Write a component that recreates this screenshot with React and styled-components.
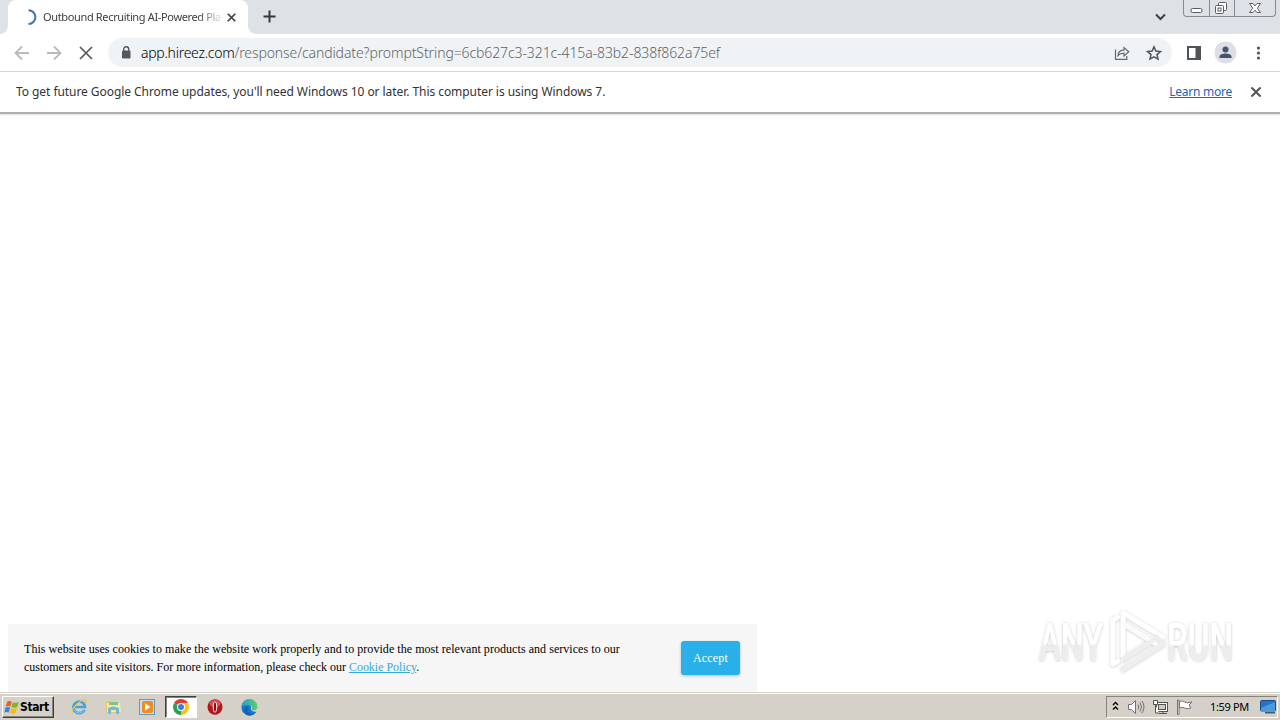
import React from 'react'
import styled, { createGlobalStyle } from 'styled-components';

const uiFont = `"Noto Sans", "Open Sans", sans-serif`;
const strip = '#dee1e6';
const face = '#d5d1c9';

const GlobalStyle = createGlobalStyle`
    * { box-sizing: border-box; }
    body { margin: 0; overflow: hidden; background: #fff; }
    svg { display: block; flex: none; }
`;

const Screen = styled.div`
    width: 1280px;
    height: 720px;
    display: flex;
    flex-direction: column;
    overflow: hidden;
    background: #fff;
    font-family: ${uiFont};
`;

const TabStrip = styled.header`
    height: 34px;
    flex: none;
    display: flex;
    align-items: flex-start;
    background: ${strip};
    padding-right: 4px;
`;

const TabCorner = styled.div`
    width: 8px;
    height: 8px;
    margin-top: 26px;
    background: radial-gradient(circle at ${p => p.$right ? '100%' : '0'} 0, ${strip} 7.5px, #fff 8.2px);
`;

const Tab = styled.div`
    width: 240px;
    height: 34px;
    display: flex;
    align-items: center;
    background: #fff;
    border-radius: 8px 8px 0 0;
    padding-left: 13px;
`;

const TabTitle = styled.div`
    width: 177px;
    margin-left: 6px;
    white-space: nowrap;
    font-size: 11px;
    line-height: 16px;
    letter-spacing: -0.35px;
    color: #3c4043;
    -webkit-mask-image: linear-gradient(90deg, #000 155px, transparent 182px);
`;

const TabClose = styled.div`
    margin-left: 7px;
`;

const NewTab = styled.div`
    margin: 10px 0 0 7px;
`;

const Spacer = styled.div`
    flex: 1;
`;

const TabSearch = styled.div`
    margin: 13px 17px 0 0;
`;

const WindowButtons = styled.div`
    width: 93px;
    height: 17px;
    display: grid;
    grid-template-columns: 25px 25px 1fr;
    border: 1px solid #888b91;
    border-top: 0;
    border-radius: 0 0 4px 4px;
`;

const WindowButton = styled.div`
    display: flex;
    justify-content: center;
    padding-top: 2px;
    border-left: ${p => p.$first ? 0 : '1px solid #888b91'};
`;

const Toolbar = styled.nav`
    height: 38px;
    flex: none;
    display: flex;
    align-items: center;
    padding-left: 14px;
    border-bottom: 1px solid #d5d7d9;
`;

const NavIcons = styled.div`
    display: flex;
    gap: 16px;
`;

const AddressBar = styled.div`
    width: 1064px;
    height: 29px;
    margin-left: 14px;
    border-radius: 15px;
    background: #f0f3f5;
    display: flex;
    align-items: center;
    padding: 0 10px 0 12px;
`;

const Url = styled.div`
    flex: 1;
    margin-left: 9px;
    font-size: 14px;
    font-weight: 300;
    line-height: 20px;
    letter-spacing: -0.1px;
    white-space: nowrap;
    color: #5f6368;
`;

const Host = styled.span`
    color: #000;
    letter-spacing: -0.27px;
`;

const BarActions = styled.div`
    display: flex;
    gap: 16px;
`;

const ToolActions = styled.div`
    display: flex;
    align-items: center;
    margin-left: 15px;
    gap: 13px;
`;

const InfoBar = styled.section`
    height: 42px;
    flex: none;
    display: flex;
    align-items: center;
    border-bottom: 2px solid #b0b0b0;
    padding: 0 16px;
    box-shadow: 0 1px 2px #ddd;
    font-size: 12px;
    line-height: 18px;
    color: #333;
`;

const InfoText = styled.div`
    flex: 1;
    white-space: nowrap;
    letter-spacing: -0.06px;
`;

const LearnMore = styled.a`
    color: #1a66bd;
    text-decoration: underline;
    margin-right: 16px;
    letter-spacing: -0.25px;
`;

const Page = styled.main`
    flex: 1;
    display: flex;
    align-items: flex-end;
    padding-left: 8px;
`;

const CookieBar = styled.section`
    width: 749px;
    height: 68px;
    display: flex;
    justify-content: space-between;
    padding: 16px 17px 0 16px;
    background: #f6f6f6;
    font-family: "Liberation Serif", serif;
    font-size: 12px;
`;

const CookieText = styled.p`
    margin: 0;
    line-height: 18px;
    white-space: nowrap;
    color: #000;
`;

const CookieLine = styled.span`
    display: block;
    letter-spacing: ${p => p.$spacing};
`;

const PolicyLink = styled.a`
    color: #39a9d6;
    text-decoration: underline;
`;

const Accept = styled.button`
    width: 59px;
    height: 34px;
    margin-top: 1px;
    padding: 0;
    border: 0;
    border-radius: 3px;
    background: #29b0e8;
    box-shadow: 0 1px 3px rgba(60, 130, 170, .45);
    color: #fff;
    font: 12px/34px "Liberation Serif", serif;
    letter-spacing: 0.2px;
`;

const Watermark = styled.div`
    margin: 0 25px 14px auto;
`;

const Taskbar = styled.footer`
    height: 28px;
    flex: none;
    display: flex;
    align-items: center;
    padding: 1px 2px 0;
    background: ${face};
    border-top: 1px solid #d0cec5;
    box-shadow: inset 0 1px #fff;
`;

const StartButton = styled.div`
    width: 52px;
    height: 22px;
    display: flex;
    align-items: center;
    padding-left: 1px;
    border: 1px solid;
    border-color: #fff #404040 #404040 #fff;
    box-shadow: inset -1px -1px #87847e;
    font: bold 12px "DejaVu Sans Condensed", "DejaVu Sans", sans-serif;
    font-stretch: condensed;
    letter-spacing: -0.4px;
    color: #000;
`;

const QuickLaunch = styled.div`
    display: flex;
    margin-left: 8px;
`;

const Launcher = styled.div`
    width: ${p => p.$active ? '32px' : '34px'};
    margin: ${p => p.$active ? '0 1px' : 0};
    height: 22px;
    display: flex;
    align-items: center;
    justify-content: center;
    border: 1px solid;
    border-color: ${p => p.$active ? '#404040 #fff #fff #404040' : 'transparent'};
    background: ${p => p.$active ? '#fff' : 'transparent'};
    box-shadow: ${p => p.$active ? 'inset 1px 1px #87847e' : 'none'};
`;

const Tray = styled.div`
    width: 172px;
    height: 22px;
    margin-left: auto;
    display: flex;
    align-items: center;
    padding-left: 5px;
    border: 1px solid;
    border-color: #87847e #fff #fff #87847e;
`;

const TrayIcons = styled.div`
    display: flex;
    align-items: center;
    gap: 7px;
    & > :first-child { margin-right: 1px; }
`;

const Clock = styled.div`
    margin-left: 17px;
    width: 50px;
    font: 11px/14px ${uiFont};
    padding-bottom: 1px;
    white-space: nowrap;
    letter-spacing: -0.35px;
    color: #000;
`;

const Cross = ({ size, width, color }) => (
    <svg width={size} height={size} viewBox="0 0 12 12" stroke={color} strokeWidth={width}>
        <path d="M1 1l10 10M11 1L1 11"/>
    </svg>
)

const Arrow = ({ flip }) => (
    <svg width="16" height="16" viewBox="0 0 16 16" fill="none" stroke="#b8babc" strokeWidth="1.8" transform={flip ? 'scale(-1 1)' : undefined}>
        <path d="M15 8H2M8 1.5L1.5 8 8 14.5"/>
    </svg>
)

const WindowControls = () => (
    <WindowButtons>
        <WindowButton $first>
            <svg width="13" height="14" fill="#fff" stroke="#5a5d65"><rect x="1" y="6.5" width="11" height="4" rx="1.5"/></svg>
        </WindowButton>
        <WindowButton>
            <svg width="14" height="14" fill="#fff" stroke="#5a5d65"><rect x="3.5" y=".5" width="8" height="8" rx="1"/><rect x=".5" y="3.5" width="8" height="8" rx="1"/><rect x="3" y="6" width="3" height="3"/></svg>
        </WindowButton>
        <WindowButton>
            <svg width="14" height="13" fill="#fff" stroke="#5a5d65"><path d="M1.500 1.500H5l2 2.400 2-2.400h3.500L9.400 6.200l3.100 4.300H9L7 8.200l-2 2.300H1.500l3.200-4.300z"/></svg>
        </WindowButton>
    </WindowButtons>
)

const AnyRunMark = () => (
    <svg width="224" height="72" viewBox="0 0 224 72">
        <defs>
            <filter id="halo" x="-10%" y="-15%" width="120%" height="130%">
                <feDropShadow dx="0" dy=".5" stdDeviation="1.800" floodColor="#000" floodOpacity=".26"/>
            </filter>
            <linearGradient id="fade" x1="0" y1="0" x2="0" y2="1">
                <stop offset=".52" stopColor="#fff"/>
                <stop offset=".56" stopColor="#ececec"/>
                <stop offset="1" stopColor="#f0f0f0"/>
            </linearGradient>
        </defs>
        <g filter="url(#halo)" fill="url(#fade)" fontFamily="Roboto, sans-serif" fontWeight="500" fontSize="51">
            <g transform="translate(8 54) scale(.64 1)"><text>ANY</text></g>
            <g transform="translate(136 54) scale(.65 1)"><text>RUN</text></g>
        </g>
        <g filter="url(#halo)" fill="none" stroke="#fff" strokeWidth="4.500" strokeLinejoin="round" strokeLinecap="round">
            <path d="M87 11l-5 3.500V58l5-3"/>
            <path d="M92 50V7l40 24"/>
            <path d="M93 18l32 20" stroke="#fbfbfb"/>
            <path d="M92 63l40-25-6-7M92 53l29-18" stroke="#eee"/>
        </g>
    </svg>
)

const StartFlag = () => (
    <svg width="16" height="17" viewBox="0 0 16 16">
        <path d="M3.200 2.200Q5.500 1 7.600 2.200L6.400 7Q4.200 6 1.800 7z" fill="#ef5b24"/>
        <path d="M8.600 2.700q2.800 1.200 6.200-.2l-1.500 5q-2.800 1.300-5.900 0z" fill="#77b82c"/>
        <path d="M1.500 8q2.300-1 4.600 0l-1.300 5q-2-1-4.500 0z" fill="#2e8bdc"/>
        <path d="M7.100 8.600q2.800 1.200 5.900 0l-1.400 4.900q-2.800 1.300-5.800-.1z" fill="#fbb917"/>
    </svg>
)

const IeIcon = () => (
    <svg width="18" height="18" viewBox="0 0 18 18" fill="none">
        <path d="M14.500 11.800A5.800 5.800 0 1 1 15 9H4.500" stroke="#45a3e0" strokeWidth="2.700"/>
        <path d="M14.500 11.500A5.800 5.800 0 0 1 4 12" stroke="#7ccbf3"/>
        <path d="M2.500 15.500C-.5 12.500 12-.5 16 2c1 .8.500 2.300-.2 3.500" stroke="#efc44f" strokeWidth="1.300"/>
    </svg>
)

const FolderIcon = () => (
    <svg width="17" height="18" viewBox="0 0 17 18">
        <path d="M1 3h5l1 2h8v10H1z" fill="#e9c761"/>
        <path d="M2 5h13l1 9H2z" fill="#fae9a4"/>
        <path d="M4 4h9v3H4z" fill="#7dc784"/>
        <path d="M3 10q5-3 11 0v6h-3v-4H6v4H3z" fill="#72b9de"/>
    </svg>
)

const PlayerIcon = () => (
    <svg width="16" height="16" viewBox="0 0 16 16">
        <rect x=".5" y=".5" width="15" height="15" fill="#c4def3" stroke="#6399c6"/>
        <rect x="3" y="2" width="11" height="12" rx="2" fill="#f28b17"/>
        <path d="M6 4.200v7.600L11.500 8z" fill="#fff"/>
    </svg>
)

const ChromeIcon = () => (
    <svg width="16" height="16" viewBox="0 0 16 16">
        <path d="M8 8L1.100 4A8 8 0 0 1 14.900 4z" fill="#e33b2e"/>
        <path d="M8 8l6.900-4A8 8 0 0 1 8 16z" fill="#fbc116"/>
        <path d="M8 8v8A8 8 0 0 1 1.100 4z" fill="#2da04f"/>
        <path d="M8 4h6.900L11.500 10 8 16z" fill="#fbc116"/>
        <circle cx="8" cy="8" r="4" fill="#fff"/>
        <circle cx="8" cy="8" r="3" fill="#3c7de0"/>
    </svg>
)

const OperaIcon = () => (
    <svg width="16" height="16" viewBox="0 0 16 16">
        <ellipse cx="8" cy="8" rx="7.500" ry="7.800" fill="#b5161c"/>
        <ellipse cx="8" cy="4.500" rx="5.500" ry="3.500" fill="#d65254"/>
        <ellipse cx="8" cy="8" rx="2.300" ry="5.500" fill="#eee"/>
        <ellipse cx="8" cy="8" rx="1.200" ry="4.800" fill="#8b1015"/>
    </svg>
)

const EdgeIcon = () => (
    <svg width="17" height="17" viewBox="0 0 17 17">
        <defs>
            <linearGradient id="edge"><stop stopColor="#249fd9"/><stop offset="1" stopColor="#5dd15c"/></linearGradient>
        </defs>
        <path d="M.5 8.500C.5 4 4 .5 8.500.5L10 8c-1 3 2 5.500 5.500 4.500C13 17.500 7 17.500 4 15 1.500 13.500.5 11 .5 8.500z" fill="#1677c7"/>
        <path d="M.5 8A8 8 0 0 1 16.500 8c0 3.500-4 4-6 2.700 1.300-1.500.8-4.300-2-4.300-3.500 0-5-.8-8 1.600z" fill="url(#edge)"/>
        <path d="M7 8c-1.500 4.500 1.500 7.500 6 7-3 2.500-9 1.800-10-2.500C2.500 10 4 8 7 8z" fill="#1560b5"/>
    </svg>
)

const App = () => {
    return (
        <>
            <GlobalStyle/>
            <Screen>
                <TabStrip>
                    <TabCorner/>
                    <Tab>
                        <svg width="16" height="16" viewBox="0 0 16 16" fill="none" stroke="#3c70c6" strokeWidth="2">
                            <path d="M7.500 1.200A6.900 6.900 0 0 1 7.500 15"/>
                        </svg>
                        <TabTitle>Outbound Recruiting AI-Powered Pla</TabTitle>
                        <TabClose><Cross size={9} width={2.300} color="#3c4043"/></TabClose>
                    </Tab>
                    <TabCorner $right/>
                    <NewTab>
                        <svg width="13" height="13" stroke="#34373b" strokeWidth="2"><path d="M6.500 .5v12M.5 6.500h12"/></svg>
                    </NewTab>
                    <Spacer/>
                    <TabSearch>
                        <svg width="11" height="8" fill="none" stroke="#3c4043" strokeWidth="2"><path d="M1 1.500l4.500 4.500L10 1.500"/></svg>
                    </TabSearch>
                    <WindowControls/>
                </TabStrip>
                <Toolbar>
                    <NavIcons>
                        <Arrow/>
                        <Arrow flip/>
                        <svg width="16" height="16" stroke="#55585c" strokeWidth="1.700"><path d="M2 2l12 12M14 2L2 14"/></svg>
                    </NavIcons>
                    <AddressBar>
                        <svg width="12" height="14" viewBox="0 0 12 14">
                            <rect x="2" y="4.500" width="8.500" height="8" rx="1" fill="#55595e"/>
                            <path d="M3.700 5V3.200a2.500 2.500 0 0 1 5 0V5" fill="none" stroke="#55595e" strokeWidth="1.400"/>
                        </svg>
                        <Url><Host>app.hireez.com</Host>/response/candidate?promptString=6cb627c3-321c-415a-83b2-838f862a75ef</Url>
                        <BarActions>
                            <svg width="16" height="16" viewBox="0 0 16 16" fill="none" stroke="#66696e" strokeWidth="1.200">
                                <path d="M1.500 4.500v9.800h11.300V11"/>
                                <path d="M4 10.500c.3-3.800 2.300-5.300 6-5.300V2.500l4.800 4.200L10 11V8.200c-2.800 0-4.500.5-6 2.300z"/>
                            </svg>
                            <svg width="16" height="16" viewBox="0 0 16 16" fill="none" stroke="#505358" strokeWidth="1.500">
                                <path d="M8 1.900l1.900 4.200 4.500.5-3.400 3 1 4.500L8 11.800l-4 2.300 1-4.500-3.400-3 4.500-.5z"/>
                            </svg>
                        </BarActions>
                    </AddressBar>
                    <ToolActions>
                        <svg width="14" height="14" fill="none" stroke="#505358" strokeWidth="2">
                            <rect x="1" y="1" width="12" height="12"/>
                            <path d="M11 1v12" strokeWidth="5"/>
                        </svg>
                        <svg width="23" height="23" viewBox="0 0 23 23">
                            <circle cx="11.500" cy="11.500" r="11" fill="#dce0e6"/>
                            <circle cx="11.500" cy="8.500" r="3" fill="#48546d"/>
                            <path d="M5.500 17v-1.500c0-4 12-4 12 0V17z" fill="#48546d"/>
                        </svg>
                        <svg width="16" height="16" fill="#505358">
                            <circle cx="8.500" cy="3" r="1.600"/><circle cx="8.500" cy="8" r="1.600"/><circle cx="8.500" cy="13" r="1.600"/>
                        </svg>
                    </ToolActions>
                </Toolbar>
                <InfoBar>
                    <InfoText>To get future Google Chrome updates, you'll need Windows 10 or later. This computer is using Windows 7.</InfoText>
                    <LearnMore>Learn more</LearnMore>
                    <svg width="16" height="16" stroke="#505358" strokeWidth="2"><path d="M3.500 3.500l9 9M12.500 3.500l-9 9"/></svg>
                </InfoBar>
                <Page>
                    <CookieBar>
                        <CookieText>
                            <CookieLine $spacing="0.05px">This website uses cookies to make the website work properly and to provide the most relevant products and services to our</CookieLine>
                            <CookieLine $spacing="-0.015px">customers and site visitors. For more information, please check our <PolicyLink>Cookie Policy</PolicyLink>.</CookieLine>
                        </CookieText>
                        <Accept>Accept</Accept>
                    </CookieBar>
                    <Watermark><AnyRunMark/></Watermark>
                </Page>
                <Taskbar>
                    <StartButton><StartFlag/>Start</StartButton>
                    <QuickLaunch>
                        <Launcher><IeIcon/></Launcher>
                        <Launcher><FolderIcon/></Launcher>
                        <Launcher><PlayerIcon/></Launcher>
                        <Launcher $active><ChromeIcon/></Launcher>
                        <Launcher><OperaIcon/></Launcher>
                        <Launcher><EdgeIcon/></Launcher>
                    </QuickLaunch>
                    <Tray>
                        <TrayIcons>
                            <svg width="7" height="12" fill="none" stroke="#000" strokeWidth="1.400"><path d="M1 4l2.500-2.500L6 4M1 8.500L3.500 6 6 8.500"/></svg>
                            <svg width="18" height="16" viewBox="0 0 18 16" fill="#fff" stroke="#74736f">
                                <path d="M1.500 5.500h3l4-4v13l-4-4h-3z"/>
                                <path d="M11 5.500q1.500 2.500 0 5M13 3.500q3 4.500 0 9M15 2q4 6 0 12" fill="none"/>
                            </svg>
                            <svg width="17" height="16" viewBox="0 0 17 16" fill="#fff" stroke="#55534f">
                                <rect x="4.500" y="3.500" width="11" height="9"/>
                                <rect x="6.500" y="5.500" width="7" height="5" fill="#ccc"/>
                                <path d="M7 14.500h8M11 13v1.500M1.500 1.500h4v4h-4zM3.500 6v8H7"/>
                            </svg>
                            <svg width="17" height="16" viewBox="0 0 17 16" fill="#fff" stroke="#74736f">
                                <path d="M1.500 1v14.500h1.500V1zM3.500 2.500q3-1.500 5 .5 2 1.500 7.500 0l-3 3 2 3q-4 1.500-6.500 0-2-1.500-5 0z"/>
                            </svg>
                        </TrayIcons>
                        <Clock>1:59 PM</Clock>
                        <svg width="17" height="14" viewBox="0 0 17 14">
                            <rect x=".5" y=".5" width="15" height="10.500" rx="1" fill="#2772c2" stroke="#184e8d"/>
                            <path d="M1 8L15 2v9H1z" fill="#4999dd"/>
                            <path d="M5 12h10v1.500H5z" fill="#405a75"/>
                        </svg>
                    </Tray>
                </Taskbar>
            </Screen>
        </>
    )
}

export default App;
